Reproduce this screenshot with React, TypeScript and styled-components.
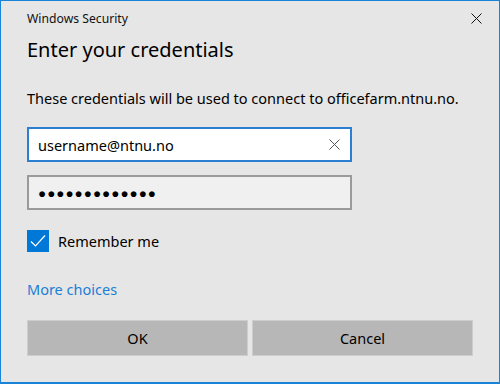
import styled, { createGlobalStyle } from 'styled-components';

const GlobalStyle = createGlobalStyle`
  html, body {
    margin: 0;
    padding: 0;
    background: #e6e6e6;
  }

  * {
    box-sizing: border-box;
  }
`;

const Window = styled.div`
  display: flex;
  flex-direction: column;
  width: 500px;
  height: 384px;
  border: 1px solid #1883d7;
  border-bottom-width: 2px;
  background: #e6e6e6;
  color: #000;
  font-family: 'Segoe UI', 'Noto Sans', sans-serif;
`;

const TitleBar = styled.div`
  display: flex;
  align-items: center;
  justify-content: space-between;
  height: 35px;
  padding-left: 26px;
  font-size: 12.2px;
  color: #111;
`;

const CloseButton = styled.button`
  display: flex;
  align-items: center;
  justify-content: center;
  width: 46px;
  height: 35px;
  padding: 0;
  border: 0;
  background: transparent;
`;

const Body = styled.div`
  display: flex;
  flex-direction: column;
  padding: 0 26px;
`;

const Heading = styled.h1`
  margin: 0;
  font-size: 20px;
  font-weight: 400;
  line-height: 28px;
`;

const Description = styled.p`
  margin: 24px 0 0;
  font-size: 14.5px;
  line-height: 20px;
`;

const Field = styled.div<{ $focused?: boolean }>`
  display: flex;
  align-items: center;
  width: 325px;
  height: 35px;
  margin-top: ${(p) => (p.$focused ? '19px' : '13px')};
  padding: 0 10px 0 9px;
  border: 2px solid ${(p) => (p.$focused ? '#2b80d4' : '#9a9a9a')};
  background: ${(p) => (p.$focused ? '#ffffff' : '#f0f0f0')};
  font-size: 14.5px;
`;

const FieldValue = styled.span`
  flex: 1;
`;

const Dots = styled.span`
  flex: 1;
  font-size: 13.5px;
  letter-spacing: 1px;
`;

const CheckRow = styled.label`
  display: flex;
  align-items: center;
  gap: 9px;
  margin-top: 20px;
  font-size: 14.5px;
`;

const CheckBox = styled.span`
  display: flex;
  align-items: center;
  justify-content: center;
  width: 22px;
  height: 22px;
  background: #0078d7;
`;

const MoreLink = styled.a`
  margin-top: 27px;
  font-size: 14.5px;
  line-height: 20px;
  color: #1a7fd6;
  text-decoration: none;
`;

const ButtonRow = styled.div`
  display: grid;
  grid-template-columns: 1fr 1fr;
  gap: 4px;
  margin-top: 21px;
`;

const Button = styled.button`
  height: 36px;
  border: 1px solid #cdcdcd;
  background: #b7b7b7;
  font-family: inherit;
  font-size: 14.5px;
  color: #000;
`;

export default function App() {
  return (
    <>
      <GlobalStyle />
      <Window>
        <TitleBar>
          Windows Security
          <CloseButton aria-label="Close">
            <svg width="11" height="11" viewBox="0 0 11 11">
              <path d="M0.5 0.5 L10.5 10.5 M10.5 0.5 L0.5 10.5" stroke="#111" strokeWidth="1" />
            </svg>
          </CloseButton>
        </TitleBar>
        <Body>
          <Heading>Enter your credentials</Heading>
          <Description>These credentials will be used to connect to officefarm.ntnu.no.</Description>
          <Field $focused>
            <FieldValue>username@ntnu.no</FieldValue>
            <svg width="11" height="11" viewBox="0 0 11 11">
              <path d="M0.5 0.5 L10.5 10.5 M10.5 0.5 L0.5 10.5" stroke="#555" strokeWidth="1" />
            </svg>
          </Field>
          <Field>
            <Dots>●●●●●●●●●●●●●</Dots>
          </Field>
          <CheckRow>
            <CheckBox>
              <svg width="16" height="16" viewBox="0 0 16 16">
                <path d="M1 8.5 L5.5 13 L15 2.5" fill="none" stroke="#fff" strokeWidth="1.2" />
              </svg>
            </CheckBox>
            Remember me
          </CheckRow>
          <MoreLink href="#">More choices</MoreLink>
          <ButtonRow>
            <Button>OK</Button>
            <Button>Cancel</Button>
          </ButtonRow>
        </Body>
      </Window>
    </>
  );
}
